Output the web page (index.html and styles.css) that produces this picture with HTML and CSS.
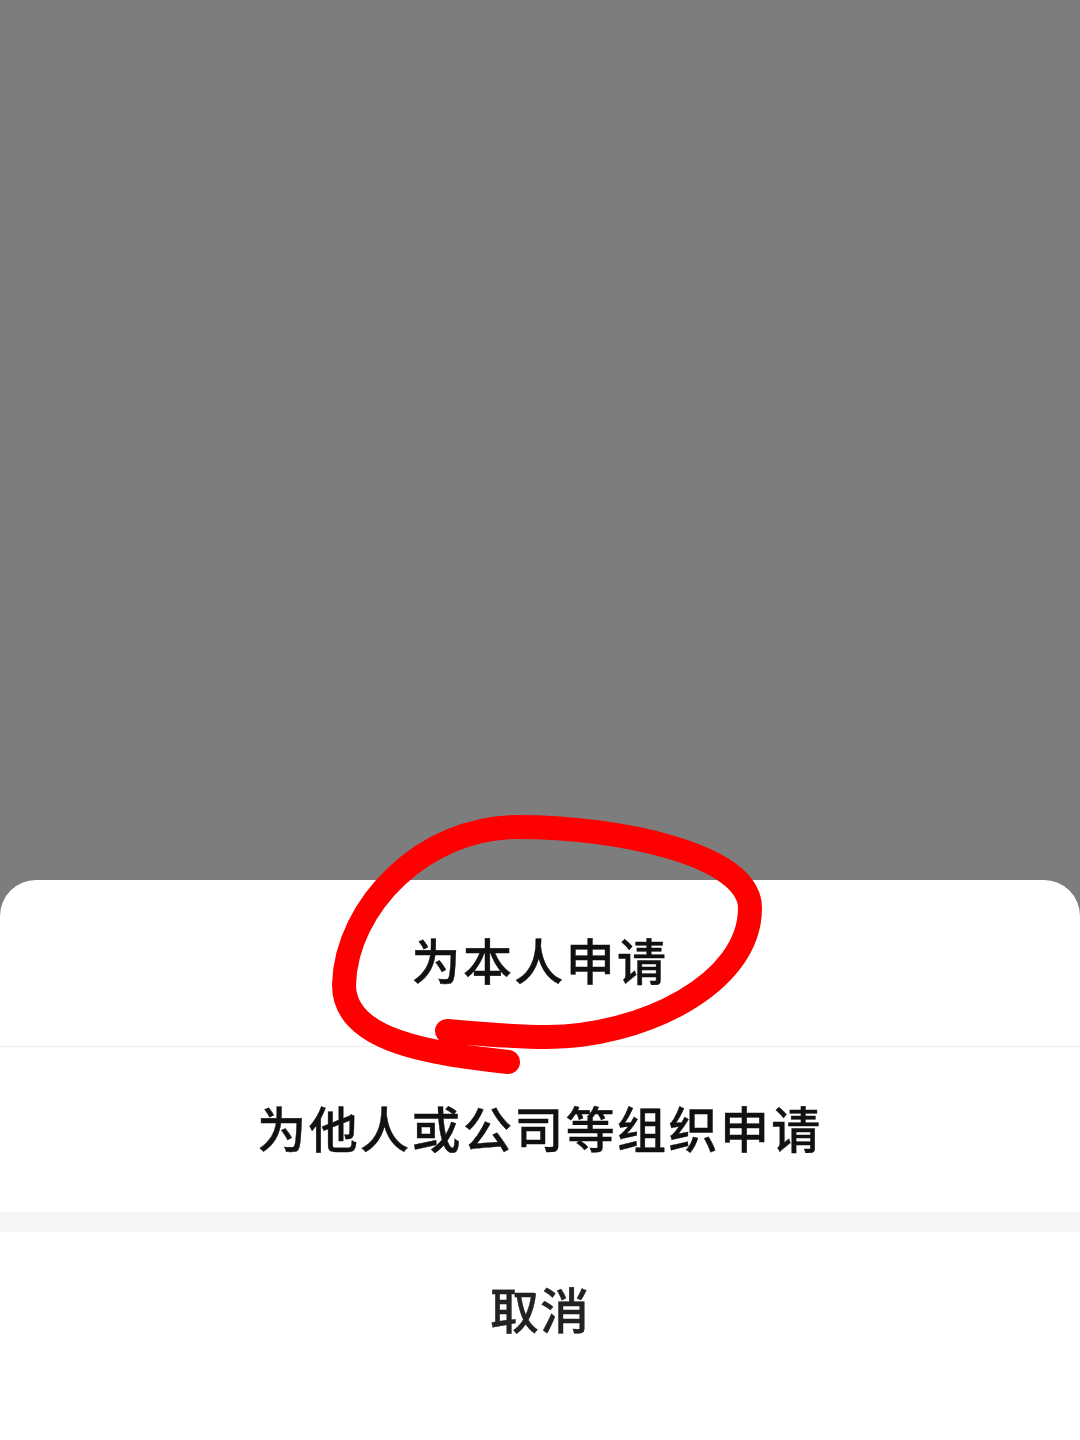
FILE: index.html
```html
<!DOCTYPE html>
<html lang="zh-CN">
<head>
<meta charset="utf-8">
<title>申请</title>
<link rel="stylesheet" href="styles.css">
</head>
<body>
<div class="page">
  <div class="scrim"></div>
  <div class="sheet">
    <div class="option option-first">为本人申请</div>
    <div class="option option-second">为他人或公司等组织申请</div>
    <div class="spacer"></div>
    <div class="cancel">取消</div>
  </div>
  <svg class="scribble" viewBox="0 0 1080 1440" width="1080" height="1440" aria-hidden="true">
    <path d="M508 1062C440 1054 344 1044 344 985C346 905 425 827 517 827C620 827 750 855 750 908C750 985 640 1037 547 1037C510 1037 470 1033 447 1031"/>
  </svg>
</div>
</body>
</html>
```

FILE: styles.css
```css
* { box-sizing: border-box; }
html, body { margin: 0; padding: 0; }
body { font-family: "Noto Sans CJK SC", "Liberation Sans", sans-serif; background: #7d7d7d; }
.page { position: relative; width: 1080px; height: 1440px; display: flex; flex-direction: column; overflow: hidden; }
.scrim { height: 880px; flex: none; background: #7d7d7d; }
.sheet { flex: 1; display: flex; flex-direction: column; background: #fff; border-radius: 36px 36px 0 0; overflow: hidden; }
.option { display: flex; align-items: center; justify-content: center; font-size: 49px; font-weight: 500; -webkit-text-stroke: 0.4px #111; letter-spacing: 2.4px; color: #111; }
.option-first { height: 167px; border-bottom: 1px solid #eeeeee; padding-bottom: 9px; }
.option-second { height: 165px; padding-bottom: 7px; }
.spacer { height: 20px; background: #f6f6f6; }
.cancel { flex: 1; display: flex; justify-content: center; padding-top: 40px; font-size: 49px; font-weight: 500; -webkit-text-stroke: 0.4px #222; letter-spacing: 1px; color: #222; }
.scribble { position: absolute; left: 0; top: 0; pointer-events: none; }
.scribble path { fill: none; stroke: #ff0000; stroke-width: 24; stroke-linecap: round; stroke-linejoin: round; }
```
